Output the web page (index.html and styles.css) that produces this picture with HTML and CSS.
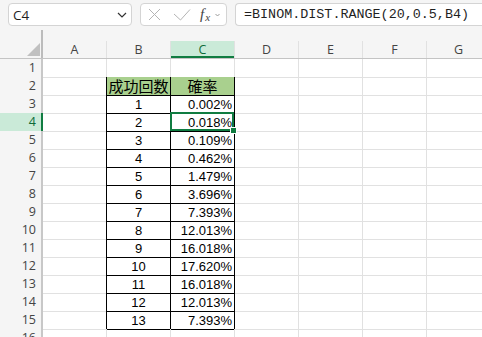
FILE: index.html
```html
<!DOCTYPE html>
<html lang="ja">
  <head>
    <meta charset="UTF-8" />
    <meta name="viewport" content="width=device-width, initial-scale=1.0" />
    <title>BINOM.DIST.RANGE</title>
    <link rel="stylesheet" href="styles.css">
  </head>
  <body>
    <div class="bar">
      <div class="namebox">
        <span>C4</span>
        <svg class="chev" width="10" height="6" viewBox="0 0 10 6"><path d="M1 1l4 4 4-4" fill="none" stroke="#333" stroke-width="1.2"/></svg>
      </div>
      <div class="fxbox">
        <svg class="ico" width="13" height="13" viewBox="0 0 13 13"><path d="M1 1l11 11M12 1L1 12" fill="none" stroke="#b4b4b4" stroke-width="1"/></svg>
        <svg class="ico ico_check" width="18" height="13" viewBox="0 0 18 13"><path d="M1 6l6.5 6L17 1.5" fill="none" stroke="#b4b4b4" stroke-width="1"/></svg>
        <span class="fx">f<sub>x</sub></span>
        <svg class="chev-sm" width="5" height="4" viewBox="0 0 5 4"><path d="M.5 1l2 2 2-2" fill="none" stroke="#9a9a9a" stroke-width="1"/></svg>
      </div>
      <div class="formula">=BINOM.DIST.RANGE(20,0.5,B4)</div>
    </div>

    <div class="sheet">
      <div class="row row_head">
        <div class="corner"><span class="corner__tri"></span></div>
        <div class="ch"><span>A</span></div>
        <div class="ch"><span>B</span></div>
        <div class="ch ch_on"><span>C</span></div>
        <div class="ch"><span>D</span></div>
        <div class="ch"><span>E</span></div>
        <div class="ch"><span>F</span></div>
        <div class="ch"><span>G</span></div>
      </div>
      <div class="row">
        <div class="rh">1</div>
        <div class="c"></div><div class="c c_top"></div><div class="c c_top"></div><div class="c"></div><div class="c"></div><div class="c"></div><div class="c"></div>
      </div>
      <div class="row">
        <div class="rh">2</div>
        <div class="c c_edge"></div><div class="c t th">成功回数</div><div class="c t th">確率</div><div class="c"></div><div class="c"></div><div class="c"></div><div class="c"></div>
      </div>
      <div class="row">
        <div class="rh">3</div>
        <div class="c c_edge"></div><div class="c t num">1</div><div class="c t pct">0.002%</div><div class="c"></div><div class="c"></div><div class="c"></div><div class="c"></div>
      </div>
      <div class="row">
        <div class="rh rh_on">4</div>
        <div class="c c_edge"></div><div class="c t num">2</div>
        <div class="c t pct c_active">0.018%<span class="sel"><span class="sel__handle"></span></span></div>
        <div class="c"></div><div class="c"></div><div class="c"></div><div class="c"></div>
      </div>
      <div class="row">
        <div class="rh">5</div>
        <div class="c c_edge"></div><div class="c t num">3</div><div class="c t pct">0.109%</div><div class="c"></div><div class="c"></div><div class="c"></div><div class="c"></div>
      </div>
      <div class="row">
        <div class="rh">6</div>
        <div class="c c_edge"></div><div class="c t num">4</div><div class="c t pct">0.462%</div><div class="c"></div><div class="c"></div><div class="c"></div><div class="c"></div>
      </div>
      <div class="row">
        <div class="rh">7</div>
        <div class="c c_edge"></div><div class="c t num">5</div><div class="c t pct">1.479%</div><div class="c"></div><div class="c"></div><div class="c"></div><div class="c"></div>
      </div>
      <div class="row">
        <div class="rh">8</div>
        <div class="c c_edge"></div><div class="c t num">6</div><div class="c t pct">3.696%</div><div class="c"></div><div class="c"></div><div class="c"></div><div class="c"></div>
      </div>
      <div class="row">
        <div class="rh">9</div>
        <div class="c c_edge"></div><div class="c t num">7</div><div class="c t pct">7.393%</div><div class="c"></div><div class="c"></div><div class="c"></div><div class="c"></div>
      </div>
      <div class="row">
        <div class="rh">10</div>
        <div class="c c_edge"></div><div class="c t num">8</div><div class="c t pct">12.013%</div><div class="c"></div><div class="c"></div><div class="c"></div><div class="c"></div>
      </div>
      <div class="row">
        <div class="rh">11</div>
        <div class="c c_edge"></div><div class="c t num">9</div><div class="c t pct">16.018%</div><div class="c"></div><div class="c"></div><div class="c"></div><div class="c"></div>
      </div>
      <div class="row">
        <div class="rh">12</div>
        <div class="c c_edge"></div><div class="c t num">10</div><div class="c t pct">17.620%</div><div class="c"></div><div class="c"></div><div class="c"></div><div class="c"></div>
      </div>
      <div class="row">
        <div class="rh">13</div>
        <div class="c c_edge"></div><div class="c t num">11</div><div class="c t pct">16.018%</div><div class="c"></div><div class="c"></div><div class="c"></div><div class="c"></div>
      </div>
      <div class="row">
        <div class="rh">14</div>
        <div class="c c_edge"></div><div class="c t num">12</div><div class="c t pct">12.013%</div><div class="c"></div><div class="c"></div><div class="c"></div><div class="c"></div>
      </div>
      <div class="row">
        <div class="rh">15</div>
        <div class="c c_edge"></div><div class="c t num">13</div><div class="c t pct">7.393%</div><div class="c"></div><div class="c"></div><div class="c"></div><div class="c"></div>
      </div>
      <div class="row">
        <div class="rh">16</div>
        <div class="c"></div><div class="c"></div><div class="c"></div><div class="c"></div><div class="c"></div><div class="c"></div><div class="c"></div>
      </div>
    </div>
  </body>
</html>
```

FILE: styles.css
```css
:root {
  --grid: #e1e1e1;
  --head-bg: #f5f5f5;
  --green: #107c41;
  --green-bg: #caead8;
}

* {
  box-sizing: border-box;
}

body {
  margin: 0;
  background: var(--head-bg);
  font-family: 'Open Sans', 'Noto Sans', sans-serif;
  color: #222;
  overflow: hidden;
}

/* formula bar */
.bar {
  display: flex;
  gap: 8px;
  height: 30px;
  padding: 3px 0 0 8px;
}

.namebox,
.fxbox,
.formula {
  height: 23px;
  background: #fff;
  border: 1px solid #d4d4d4;
  border-radius: 4px;
  display: flex;
  align-items: center;
}

.namebox {
  width: 124px;
  justify-content: space-between;
  padding: 0 4px 0 4px;
  font-size: 13.5px;
  color: #1f1f1f;
}

.chev {
  margin-top: 1px;
}

.fxbox {
  width: 87px;
  padding-left: 7px;
}

.ico_check {
  margin-left: 12px;
}

.fx {
  margin-left: 9px;
  font: italic 15px 'Liberation Serif', serif;
  color: #444;
  line-height: 1;
}

.fx sub {
  font-size: 11px;
  vertical-align: -2px;
  margin-left: 1px;
}

.chev-sm {
  margin-left: 5px;
}

.formula {
  flex: 1;
  border-right: 0;
  border-radius: 4px 0 0 4px;
  padding-left: 8px;
  font: 13.4px 'Liberation Mono', monospace;
  color: #1f1f1f;
}

/* sheet */
.sheet {
  width: 491px;
  background: #fff;
}

.row {
  display: grid;
  grid-template-columns: 43px repeat(7, 64px);
  height: 18px;
}

.row_head {
  height: 29px;
  background: var(--head-bg);
  border-bottom: 1px solid #c4c4c4;
}

.corner {
  border-right: 2px solid #bcbcbc;
  display: flex;
  justify-content: flex-end;
  align-items: flex-end;
  padding: 0 1px 2px 0;
}

.corner__tri {
  width: 13px;
  height: 13px;
  background: #c0c0c0;
  clip-path: polygon(100% 0, 100% 100%, 0 100%);
}

.ch {
  display: flex;
  align-items: flex-end;
}

.ch span {
  flex: 1;
  height: 17px;
  border-right: 1px solid var(--grid);
  text-align: center;
  font-size: 12.5px;
  line-height: 17px;
  color: #444;
}

.ch_on span {
  background: var(--green-bg);
  box-shadow: inset 0 -2px var(--green);
  color: #0e6b38;
}

.rh {
  background: var(--head-bg);
  border-right: 2px solid #c8c8c8;
  border-bottom: 1px solid var(--grid);
  text-align: right;
  padding-right: 5px;
  font-size: 12.5px;
  line-height: 18px;
  color: #444;
}

.rh_on {
  background: var(--green-bg);
  border-right-color: var(--green);
  color: #0e6b38;
}

.c {
  border-right: 1px solid var(--grid);
  border-bottom: 1px solid var(--grid);
  padding-top: 3px;
  font: 13px/14px 'Liberation Sans', 'Noto Sans CJK JP', sans-serif;
  color: #000;
  white-space: nowrap;
}

.c_top {
  border-bottom-color: #000;
}

.c_edge {
  border-right-color: #000;
}

.t {
  border-right-color: #000;
  border-bottom-color: #000;
}

.th {
  background: #a9d08e;
  text-align: center;
  padding-top: 0;
  font: 15px/17px 'Noto Sans CJK JP', sans-serif;
}

.num {
  text-align: center;
}

.pct {
  text-align: right;
  padding-right: 2px;
}

/* active cell */
.c_active {
  position: relative;
}

.sel {
  position: absolute;
  z-index: 2;
  left: -1px;
  top: -1px;
  width: 64px;
  height: 19px;
  border: 2px solid var(--green);
}

.sel__handle {
  position: absolute;
  right: -5px;
  bottom: -5px;
  width: 7px;
  height: 7px;
  background: var(--green);
  border: 1px solid #fff;
}
```
